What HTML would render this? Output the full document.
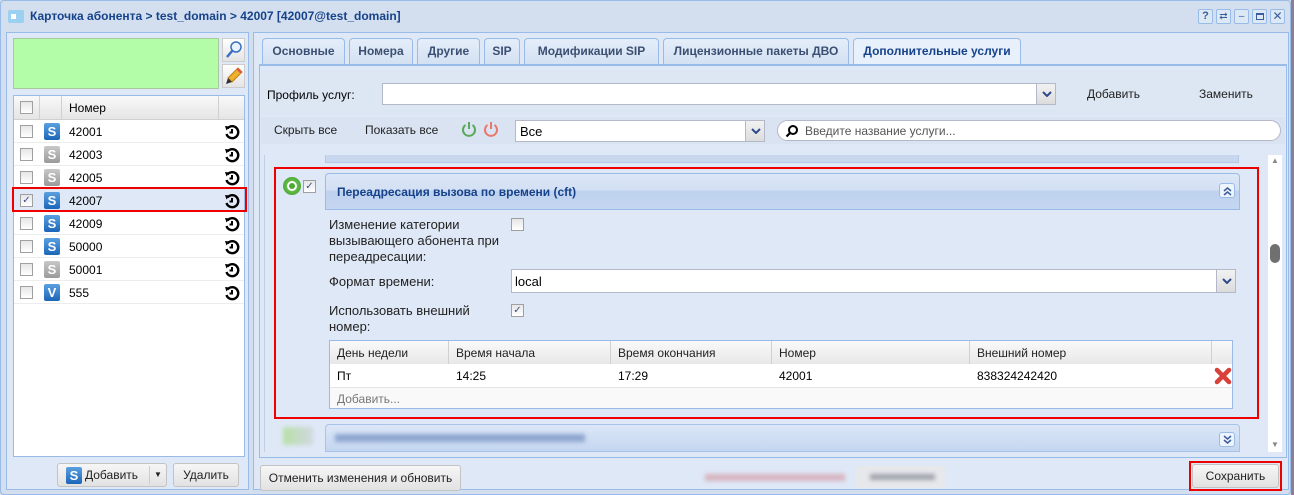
<!DOCTYPE html>
<html><head><meta charset="utf-8"><style>
*{box-sizing:border-box;margin:0;padding:0}
body{width:1294px;height:495px;overflow:hidden;background:#cfdbea;font-family:"Liberation Sans",Arial,sans-serif;font-size:12px;color:#000;position:relative}
.a{position:absolute}
.t{position:absolute;white-space:nowrap}
.btn{position:absolute;border:1px solid #c3c3c3;border-radius:3px;background:linear-gradient(#f6f6f6,#e2e2e2);text-align:center;color:#222}
.tab{position:absolute;top:38px;height:26px;border:1px solid #99bbe8;border-bottom:none;border-radius:4px 4px 0 0;background:linear-gradient(#e5eefa,#d3e1f2);font-weight:bold;color:#3b4f72;font-size:12px;text-align:center;line-height:24px}
.cb{position:absolute;width:13px;height:13px;border:1px solid #a0a0a0;background:linear-gradient(#e6e6e6,#fff)}
.row{position:absolute;left:14px;width:230px;height:23px;border-bottom:1px solid #ededed;background:#fff}
.row .cb{left:6px;top:5px}
.row .s{position:absolute;left:30px;top:3px;width:16px;height:17px;border-radius:2px;color:#fff;font-weight:bold;font-size:13px;text-align:center;line-height:17px}
.row .n{position:absolute;left:55px;top:5px;font-size:12px}
.row svg{position:absolute;left:210px;top:4px}
.blue{background:linear-gradient(#5aa0e0,#1c66b8)}
.gray{background:linear-gradient(#c8c8c8,#9a9a9a)}
.th{position:absolute;top:0;height:23px;border-right:1px solid #d0d0d0;padding:5px 7px;color:#222}
.dd{position:absolute;width:20px;border:1px solid #b5b8c8;background:linear-gradient(#f2f2f2,#dcdcdc)}
.dd svg{position:absolute;left:5px;top:50%;margin-top:-3px}
</style></head><body>
<svg width="0" height="0" style="position:absolute"><defs>
<symbol id="hist" viewBox="0 0 16 16"><path d="M3.5 4.5 A6 6 0 1 1 2.5 10" fill="none" stroke="#000" stroke-width="2.4"/><path d="M1 2 L5.5 2.5 L2.5 6.5Z" fill="#000"/><path d="M8 5 V8.5 H5.5" fill="none" stroke="#000" stroke-width="2"/></symbol>
<symbol id="chev" viewBox="0 0 10 6"><path d="M1 1 L5 5 L9 1" fill="none" stroke="#2c4a8a" stroke-width="2"/></symbol>
</defs></svg>
<div class="a" style="left:0;top:0;width:1291px;height:495px;border:1px solid #99bbe8;border-radius:4px;background:#d3dfee"></div>
<div class="a" style="left:1291px;top:0;width:3px;height:495px;background:#8a7f95"></div>
<div class="a" style="left:8px;top:10px;width:16px;height:13px;background:#9cd0f0;border-radius:2px"></div>
<div class="a" style="left:11px;top:14px;width:5px;height:5px;background:#fff"></div>
<div class="t" style="left:30px;top:9px;font-weight:bold;font-size:12px;color:#15428b">Карточка абонента &gt; test_domain &gt; 42007 [42007@test_domain]</div>
<div class="a" style="left:1198px;top:9px;width:90px;height:16px">
<span class="a" style="left:0;width:15px;height:15px;border:1px solid #99bbe8;border-radius:2px;background:#dde8f5;color:#3a5c9a;font-weight:bold;font-size:11px;text-align:center;line-height:13px">?</span>
<span class="a" style="left:18px;width:15px;height:15px;border:1px solid #99bbe8;border-radius:2px;background:#dde8f5;color:#3a5c9a;font-size:10px;text-align:center;line-height:13px">⇄</span>
<span class="a" style="left:36px;width:15px;height:15px;border:1px solid #99bbe8;border-radius:2px;background:#dde8f5;color:#3a5c9a;font-size:10px;text-align:center;line-height:13px">–</span>
<span class="a" style="left:54px;width:15px;height:15px;border:1px solid #99bbe8;border-radius:2px;background:#dde8f5"><span class="a" style="left:3px;top:3px;width:8px;height:7px;border:1px solid #3a5c9a;border-top-width:2px"></span></span>
<span class="a" style="left:72px;width:15px;height:15px;border:1px solid #99bbe8;border-radius:2px;background:#dde8f5;color:#3a5c9a;font-size:12px;text-align:center;line-height:13px">✕</span>
</div>

<div class="a" style="left:6px;top:32px;width:243px;height:458px;border:1px solid #99bbe8;background:#dfe8f6"></div>
<div class="a" style="left:13px;top:38px;width:206px;height:51px;background:#b3fca8;border:1px solid #a8c8a0"></div>
<div class="a" style="left:222px;top:38px;width:23px;height:24px;background:linear-gradient(#fff,#e4e4e4);border:1px solid #ccc"><svg width="21" height="22"><circle cx="13" cy="8" r="5" fill="#e8f2fc" stroke="#3a70c0" stroke-width="1.5"/><path d="M9.5 11.5 L4 18" stroke="#3a70c0" stroke-width="2.5"/></svg></div>
<div class="a" style="left:222px;top:64px;width:23px;height:24px;background:linear-gradient(#fff,#e4e4e4);border:1px solid #ccc"><svg width="21" height="22"><path d="M15 3 L19 7 L9 17 L5 13Z" fill="#f0b030" stroke="#c08010"/><path d="M5 13 L9 17 L3 19Z" fill="#333"/><path d="M15 3 L19 7 L17.5 8.5 L13.5 4.5Z" fill="#e05050"/></svg></div>
<div class="a" style="left:13px;top:95px;width:232px;height:362px;background:#fff;border:1px solid #99bbe8"></div>
<div class="a" style="left:14px;top:96px;width:230px;height:24px;background:linear-gradient(#f9f9f9,#e5e5e5);border-bottom:1px solid #d0d0d0">
 <div class="cb" style="left:6px;top:5px"></div>
 <div class="a" style="left:25px;top:0;width:1px;height:24px;background:#d0d0d0"></div>
 <div class="a" style="left:47px;top:0;width:1px;height:24px;background:#d0d0d0"></div>
 <div class="a" style="left:204px;top:0;width:1px;height:24px;background:#d0d0d0"></div>
 <div class="t" style="left:55px;top:5px">Номер</div>
</div>
<div class="row" style="top:120px"><div class="cb"></div><div class="s blue">S</div><div class="n">42001</div><svg width="16" height="16"><use href="#hist"/></svg></div>
<div class="row" style="top:143px"><div class="cb"></div><div class="s gray">S</div><div class="n">42003</div><svg width="16" height="16"><use href="#hist"/></svg></div>
<div class="row" style="top:166px"><div class="cb"></div><div class="s gray">S</div><div class="n">42005</div><svg width="16" height="16"><use href="#hist"/></svg></div>
<div class="row" style="top:189px;background:#dfe8f6"><div class="cb" style="color:#3a4f8a;font-size:10px;line-height:11px;text-align:center">✓</div><div class="s blue">S</div><div class="n">42007</div><svg width="16" height="16"><use href="#hist"/></svg></div>
<div class="a" style="left:12px;top:187px;width:235px;height:25px;border:2px solid #e00"></div>
<div class="row" style="top:212px"><div class="cb"></div><div class="s blue">S</div><div class="n">42009</div><svg width="16" height="16"><use href="#hist"/></svg></div>
<div class="row" style="top:235px"><div class="cb"></div><div class="s blue">S</div><div class="n">50000</div><svg width="16" height="16"><use href="#hist"/></svg></div>
<div class="row" style="top:258px"><div class="cb"></div><div class="s gray">S</div><div class="n">50001</div><svg width="16" height="16"><use href="#hist"/></svg></div>
<div class="row" style="top:281px"><div class="cb"></div><div class="s blue">V</div><div class="n">555</div><svg width="16" height="16"><use href="#hist"/></svg></div>
<div class="btn" style="left:57px;top:463px;width:110px;height:24px"><span class="a blue" style="left:8px;top:3px;width:16px;height:17px;border-radius:2px;color:#fff;font-weight:bold;font-size:13px;line-height:17px">S</span><span class="t" style="left:27px;top:4px">Добавить</span><span class="a" style="left:91px;top:2px;width:1px;height:18px;background:#ccc"></span><span class="t" style="left:96px;top:6px;font-size:8px">▼</span></div>
<div class="btn" style="left:173px;top:463px;width:66px;height:24px;line-height:22px">Удалить</div>

<div class="a" style="left:253px;top:32px;width:1036px;height:458px;border:1px solid #99bbe8;background:#dfe8f6"></div>
<div class="tab" style="left:262px;width:83px">Основные</div>
<div class="tab" style="left:349px;width:64px">Номера</div>
<div class="tab" style="left:417px;width:63px">Другие</div>
<div class="tab" style="left:484px;width:36px">SIP</div>
<div class="tab" style="left:524px;width:135px">Модификации SIP</div>
<div class="tab" style="left:663px;width:186px">Лицензионные пакеты ДВО</div>
<div class="tab" style="left:853px;width:168px;background:#e8f0fb;color:#15428b;height:27px">Дополнительные услуги</div>
<div class="a" style="left:259px;top:64px;width:1028px;height:394px;border:1px solid #99bbe8;border-top:2px solid #99bbe8;background:#dfe8f6"></div>
<div class="a" style="left:261px;top:70px;width:1024px;height:45px;background:#dde6f3"></div>
<div class="t" style="left:267px;top:88px">Профиль услуг:</div>
<div class="a" style="left:382px;top:83px;width:674px;height:22px;border:1px solid #b5b8c8;background:#fff"></div>
<div class="dd" style="left:1036px;top:83px;height:22px"><svg width="10" height="6"><use href="#chev"/></svg></div>
<div class="t" style="left:1087px;top:87px;color:#222">Добавить</div>
<div class="t" style="left:1199px;top:87px;color:#222">Заменить</div>
<div class="a" style="left:261px;top:117px;width:1024px;height:27px;background:#d9e3f1"></div>
<div class="t" style="left:274px;top:123px;color:#222">Скрыть все</div>
<div class="t" style="left:365px;top:123px;color:#222">Показать все</div>
<svg class="a" style="left:461px;top:121px" width="16" height="16"><path d="M4.5 4 A6 6 0 1 0 11.5 4" fill="none" stroke="#5aa95a" stroke-width="2"/><path d="M8 1 V8" stroke="#5aa95a" stroke-width="2"/></svg>
<svg class="a" style="left:483px;top:121px" width="16" height="16"><path d="M4.5 4 A6 6 0 1 0 11.5 4" fill="none" stroke="#e8786a" stroke-width="2"/><path d="M8 1 V8" stroke="#e8786a" stroke-width="2"/></svg>
<div class="a" style="left:515px;top:120px;width:250px;height:22px;border:1px solid #b5b8c8;background:#fff"><span class="t" style="left:4px;top:3px;font-size:13px">Все</span></div>
<div class="dd" style="left:745px;top:120px;height:22px"><svg width="10" height="6"><use href="#chev"/></svg></div>
<div class="a" style="left:777px;top:120px;width:504px;height:21px;border:1px solid #b5b8c8;border-radius:11px;background:#fff"><svg class="a" style="left:7px;top:3px" width="14" height="14"><circle cx="8" cy="6" r="4" fill="none" stroke="#000" stroke-width="2"/><path d="M5 9 L1.5 12.5" stroke="#000" stroke-width="2.2"/></svg><span class="t" style="left:27px;top:3px;color:#555">Введите название услуги...</span></div>

<div class="a" style="left:264px;top:155px;width:1px;height:297px;background:#c0cfe6"></div>
<div class="a" style="left:325px;top:155px;width:914px;height:8px;background:#c8d7ee;border:1px solid #b5c8e8;border-top:none"></div>
<div class="a" style="left:1268px;top:155px;width:14px;height:297px;background:#fff"></div>
<div class="t" style="left:1271px;top:156px;color:#888;font-size:8px">▲</div>
<div class="a" style="left:1270px;top:244px;width:10px;height:19px;border-radius:5px;background:#707070"></div>
<div class="t" style="left:1271px;top:440px;color:#888;font-size:8px">▼</div>

<div class="a" style="left:274px;top:167px;width:985px;height:252px;border:2px solid #e00"></div>
<div class="a" style="left:283px;top:177px;width:18px;height:18px;border-radius:50%;background:radial-gradient(#7fd35e,#3a9b28)"></div>
<div class="a" style="left:287px;top:181px;width:10px;height:10px;border-radius:50%;background:#fff"></div>
<div class="a" style="left:289px;top:183px;width:6px;height:6px;border-radius:50%;background:#4aaa32"></div>
<div class="cb" style="left:303px;top:180px;color:#3a4f8a;font-size:10px;line-height:11px;text-align:center">✓</div>
<div class="a" style="left:325px;top:173px;width:915px;height:37px;border:1px solid #99bbe8;border-radius:4px 4px 0 0;background:linear-gradient(#dce7f7 0%,#d3e0f3 45%,#bfd2ee 50%,#c4d6f0 100%)"></div>
<div class="t" style="left:337px;top:185px;font-weight:bold;color:#15428b">Переадресация вызова по времени (cft)</div>
<div class="a" style="left:1219px;top:183px;width:16px;height:15px;border:1px solid #99bbe8;border-radius:3px;background:#eef4fc"><svg class="a" style="left:3px;top:2px" width="9" height="10"><path d="M1 5 L4.5 2 L8 5 M1 9 L4.5 6 L8 9" fill="none" stroke="#3a5c9a" stroke-width="1.5"/></svg></div>

<div class="t" style="left:329px;top:217px;line-height:16px;font-size:13px;color:#222">Изменение категории<br>вызывающего абонента при<br>переадресации:</div>
<div class="cb" style="left:511px;top:218px"></div>
<div class="t" style="left:329px;top:274px;font-size:13px;color:#222">Формат времени:</div>
<div class="a" style="left:511px;top:269px;width:725px;height:24px;border:1px solid #b5b8c8;background:#fff"><span class="t" style="left:3px;top:4px;font-size:13px">local</span></div>
<div class="dd" style="left:1216px;top:269px;height:24px"><svg width="10" height="6"><use href="#chev"/></svg></div>
<div class="t" style="left:329px;top:303px;line-height:16px;font-size:13px;color:#222">Использовать внешний<br>номер:</div>
<div class="cb" style="left:511px;top:304px;color:#3a4f8a;font-size:10px;line-height:11px;text-align:center">✓</div>

<div class="a" style="left:329px;top:340px;width:904px;height:69px;border:1px solid #99bbe8;background:#f9f9f9">
 <div class="a" style="left:0;top:0;width:902px;height:23px;background:linear-gradient(#f9f9f9,#e8e8e8)">
  <div class="th" style="left:0;width:119px">День недели</div>
  <div class="th" style="left:119px;width:162px">Время начала</div>
  <div class="th" style="left:281px;width:161px">Время окончания</div>
  <div class="th" style="left:442px;width:198px">Номер</div>
  <div class="th" style="left:640px;width:242px">Внешний номер</div>
 </div>
 <div class="a" style="left:0;top:23px;width:902px;height:24px;background:#fff;border-bottom:1px solid #e5e5e5">
  <span class="t" style="left:7px;top:5px">Пт</span><span class="t" style="left:126px;top:5px">14:25</span><span class="t" style="left:288px;top:5px">17:29</span><span class="t" style="left:449px;top:5px">42001</span><span class="t" style="left:647px;top:5px">838324242420</span>
  <svg class="a" style="left:884px;top:3px" width="18" height="18"><path d="M3 3 L15 15 M15 3 L3 15" stroke="#d9403a" stroke-width="4.5" stroke-linecap="round"/></svg>
 </div>
 <span class="t" style="left:7px;top:51px;color:#777">Добавить...</span>
</div>

<div class="a" style="left:283px;top:427px;width:30px;height:18px;background:linear-gradient(90deg,#b8e0a8,#d0d8e0);filter:blur(2px)"></div>
<div class="a" style="left:325px;top:424px;width:915px;height:28px;border:1px solid #a9c2e8;border-radius:4px 4px 0 0;background:linear-gradient(#dce7f7,#c4d6f0)"></div>
<div class="a" style="left:335px;top:434px;width:250px;height:8px;background:#8ea6d0;filter:blur(2px)"></div>
<div class="a" style="left:1219px;top:432px;width:16px;height:15px;border:1px solid #99bbe8;border-radius:3px;background:#eef4fc"><svg class="a" style="left:3px;top:2px" width="9" height="10"><path d="M1 1 L4.5 4 L8 1 M1 5 L4.5 8 L8 5" fill="none" stroke="#3a5c9a" stroke-width="1.5"/></svg></div>

<div class="btn" style="left:260px;top:465px;width:201px;height:26px;line-height:24px">Отменить изменения и обновить</div>
<div class="a" style="left:705px;top:474px;width:140px;height:7px;background:#d8b4c0;filter:blur(2px)"></div>
<div class="a" style="left:855px;top:466px;width:90px;height:22px;background:#e6e8ec;border-radius:3px"></div>
<div class="a" style="left:870px;top:474px;width:65px;height:6px;background:#a0a4ac;filter:blur(2px)"></div>
<div class="btn" style="left:1192px;top:464px;width:87px;height:24px;line-height:22px">Сохранить</div>
<div class="a" style="left:1189px;top:461px;width:93px;height:30px;border:2px solid #e00"></div>
</body></html>
